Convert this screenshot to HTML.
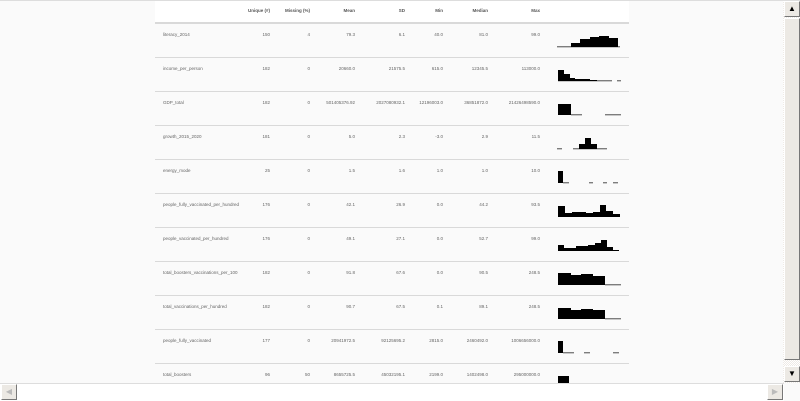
<!DOCTYPE html>
<html><head><meta charset="utf-8"><style>
html,body{margin:0;padding:0;width:800px;height:400px;overflow:hidden;background:#fafafa;font-family:"Liberation Sans",sans-serif;}
.t{position:absolute;font-size:4.5px;color:#666;white-space:nowrap;line-height:5px}
.r{text-align:right}
.h{font-weight:bold;color:#555}
</style></head><body>
<div style="position:absolute;left:0;top:0;width:800px;height:1px;background:#ddd"></div>
<div style="position:absolute;left:155px;top:1px;width:474px;height:21px;background:#fff"></div>
<svg width="800" height="400" style="position:absolute;left:0;top:0">
<g fill="#d9d9d9">
<rect x="155" y="22" width="474" height="2"/>
<rect x="155" y="57" width="474" height="1"/><rect x="155" y="91" width="474" height="1"/>
<rect x="155" y="125" width="474" height="1"/><rect x="155" y="159" width="474" height="1"/>
<rect x="155" y="193" width="474" height="1"/><rect x="155" y="227" width="474" height="1"/>
<rect x="155" y="261" width="474" height="1"/><rect x="155" y="295" width="474" height="1"/>
<rect x="155" y="329" width="474" height="1"/><rect x="155" y="363" width="474" height="1"/>
</g>
<g fill="#000">
<!-- r1 baseline 47 -->
<rect x="557" y="46.5" width="63" height="0.7"/>
<rect x="571" y="43" width="9" height="4"/><rect x="580" y="39" width="10" height="8"/><rect x="590" y="37" width="9" height="10"/><rect x="599" y="36" width="10" height="11"/><rect x="609" y="38" width="9" height="9"/>
<!-- r2 baseline 81 -->
<rect x="558" y="80.5" width="54" height="0.7"/><rect x="617" y="80.5" width="4" height="0.7"/>
<rect x="558" y="70" width="6" height="11"/><rect x="564" y="74" width="6" height="7"/><rect x="570" y="78" width="5" height="3"/><rect x="575" y="79" width="15" height="2"/><rect x="590" y="80" width="7" height="1"/>
<!-- r3 baseline 115 -->
<rect x="558" y="104" width="13" height="11"/><rect x="571" y="114.5" width="11" height="0.7"/><rect x="605" y="114.5" width="16" height="0.7"/>
<!-- r4 baseline 149 -->
<rect x="557" y="148.5" width="5" height="0.7"/><rect x="573" y="148.5" width="34" height="0.7"/>
<rect x="579" y="144" width="6" height="5"/><rect x="585" y="138" width="6" height="11"/><rect x="591" y="144" width="6" height="5"/>
<!-- r5 baseline 183 -->
<rect x="558" y="171" width="5" height="12"/><rect x="563" y="182.5" width="6" height="0.7"/><rect x="589" y="182.5" width="4" height="0.7"/><rect x="603" y="182.5" width="4" height="0.7"/><rect x="613" y="182.5" width="5" height="0.7"/>
<!-- r6 baseline 217 -->
<rect x="558" y="206" width="7" height="11"/><rect x="565" y="213" width="7" height="4"/><rect x="572" y="212" width="7" height="5"/><rect x="579" y="212" width="7" height="5"/><rect x="586" y="213" width="7" height="4"/><rect x="593" y="212" width="7" height="5"/><rect x="600" y="205" width="6" height="12"/><rect x="606" y="211" width="7" height="6"/><rect x="613" y="214" width="7" height="3"/>
<!-- r7 baseline 251 -->
<rect x="558" y="245" width="6" height="6"/><rect x="564" y="248" width="6" height="3"/><rect x="570" y="248" width="6" height="3"/><rect x="576" y="246" width="6" height="5"/><rect x="582" y="246" width="6" height="5"/><rect x="588" y="245" width="7" height="6"/><rect x="595" y="243" width="6" height="8"/><rect x="601" y="240" width="6" height="11"/><rect x="607" y="247" width="6" height="4"/><rect x="613" y="250" width="6" height="1"/>
<!-- r8 baseline 285 -->
<rect x="558" y="273" width="13" height="12"/><rect x="571" y="275" width="10" height="10"/><rect x="581" y="274" width="12" height="11"/><rect x="593" y="276" width="12" height="9"/><rect x="605" y="284.5" width="16" height="0.7"/>
<!-- r9 baseline 319 -->
<rect x="558" y="308" width="13" height="11"/><rect x="571" y="310" width="10" height="9"/><rect x="581" y="309" width="12" height="10"/><rect x="593" y="310" width="12" height="9"/><rect x="605" y="318.5" width="16" height="0.7"/>
<!-- r10 baseline 353 -->
<rect x="558" y="341" width="5" height="12"/><rect x="563" y="352.5" width="11" height="0.7"/><rect x="584" y="352.5" width="6" height="0.7"/><rect x="613" y="352.5" width="6" height="0.7"/>
<!-- r11 -->
<rect x="558" y="376" width="11" height="7"/>
</g>
</svg>
<div class="t h r" style="left:230px;top:8px;width:40px">Unique (#)</div>
<div class="t h r" style="left:270px;top:8px;width:40px">Missing (%)</div>
<div class="t h r" style="left:315px;top:8px;width:40px">Mean</div>
<div class="t h r" style="left:365px;top:8px;width:40px">SD</div>
<div class="t h r" style="left:403px;top:8px;width:40px">Min</div>
<div class="t h r" style="left:448px;top:8px;width:40px">Median</div>
<div class="t h r" style="left:500px;top:8px;width:40px">Max</div>

<div style="position:absolute;left:0;top:0">
<div class="t" style="left:163px;top:32px">literacy_2014</div>
<div class="t" style="left:163px;top:66px">income_per_person</div>
<div class="t" style="left:163px;top:100px">GDP_total</div>
<div class="t" style="left:163px;top:134px">growth_2015_2020</div>
<div class="t" style="left:163px;top:168px">energy_mode</div>
<div class="t" style="left:163px;top:202px">people_fully_vaccinated_per_hundred</div>
<div class="t" style="left:163px;top:236px">people_vaccinated_per_hundred</div>
<div class="t" style="left:163px;top:270px">total_boosters_vaccinations_per_100</div>
<div class="t" style="left:163px;top:304px">total_vaccinations_per_hundred</div>
<div class="t" style="left:163px;top:338px">people_fully_vaccinated</div>
<div class="t" style="left:163px;top:372px">total_boosters</div>
</div>
<div style="position:absolute;left:0;top:0">
<!-- columns -->
<div class="t r" style="left:230px;top:32px;width:40px">150</div><div class="t r" style="left:270px;top:32px;width:40px">4</div><div class="t r" style="left:315px;top:32px;width:40px">79.3</div><div class="t r" style="left:365px;top:32px;width:40px">6.1</div><div class="t r" style="left:403px;top:32px;width:40px">40.0</div><div class="t r" style="left:448px;top:32px;width:40px">81.0</div><div class="t r" style="left:500px;top:32px;width:40px">99.0</div>
<div class="t r" style="left:230px;top:66px;width:40px">182</div><div class="t r" style="left:270px;top:66px;width:40px">0</div><div class="t r" style="left:315px;top:66px;width:40px">20660.0</div><div class="t r" style="left:365px;top:66px;width:40px">21575.5</div><div class="t r" style="left:403px;top:66px;width:40px">615.0</div><div class="t r" style="left:448px;top:66px;width:40px">12345.5</div><div class="t r" style="left:500px;top:66px;width:40px">113000.0</div>
<div class="t r" style="left:230px;top:100px;width:40px">182</div><div class="t r" style="left:270px;top:100px;width:40px">0</div><div class="t r" style="left:300px;top:100px;width:55px">501405376.92</div><div class="t r" style="left:345px;top:100px;width:60px">2027080932.1</div><div class="t r" style="left:393px;top:100px;width:50px">12196003.0</div><div class="t r" style="left:433px;top:100px;width:55px">36851872.0</div><div class="t r" style="left:480px;top:100px;width:60px">21426498590.0</div>
<div class="t r" style="left:230px;top:134px;width:40px">181</div><div class="t r" style="left:270px;top:134px;width:40px">0</div><div class="t r" style="left:315px;top:134px;width:40px">5.0</div><div class="t r" style="left:365px;top:134px;width:40px">2.3</div><div class="t r" style="left:403px;top:134px;width:40px">-3.0</div><div class="t r" style="left:448px;top:134px;width:40px">2.9</div><div class="t r" style="left:500px;top:134px;width:40px">11.5</div>
<div class="t r" style="left:230px;top:168px;width:40px">25</div><div class="t r" style="left:270px;top:168px;width:40px">0</div><div class="t r" style="left:315px;top:168px;width:40px">1.5</div><div class="t r" style="left:365px;top:168px;width:40px">1.6</div><div class="t r" style="left:403px;top:168px;width:40px">1.0</div><div class="t r" style="left:448px;top:168px;width:40px">1.0</div><div class="t r" style="left:500px;top:168px;width:40px">10.0</div>
<div class="t r" style="left:230px;top:202px;width:40px">176</div><div class="t r" style="left:270px;top:202px;width:40px">0</div><div class="t r" style="left:315px;top:202px;width:40px">42.1</div><div class="t r" style="left:365px;top:202px;width:40px">26.9</div><div class="t r" style="left:403px;top:202px;width:40px">0.0</div><div class="t r" style="left:448px;top:202px;width:40px">44.2</div><div class="t r" style="left:500px;top:202px;width:40px">93.5</div>
<div class="t r" style="left:230px;top:236px;width:40px">176</div><div class="t r" style="left:270px;top:236px;width:40px">0</div><div class="t r" style="left:315px;top:236px;width:40px">49.1</div><div class="t r" style="left:365px;top:236px;width:40px">27.1</div><div class="t r" style="left:403px;top:236px;width:40px">0.0</div><div class="t r" style="left:448px;top:236px;width:40px">52.7</div><div class="t r" style="left:500px;top:236px;width:40px">99.0</div>
<div class="t r" style="left:230px;top:270px;width:40px">182</div><div class="t r" style="left:270px;top:270px;width:40px">0</div><div class="t r" style="left:315px;top:270px;width:40px">91.8</div><div class="t r" style="left:365px;top:270px;width:40px">67.6</div><div class="t r" style="left:403px;top:270px;width:40px">0.0</div><div class="t r" style="left:448px;top:270px;width:40px">90.5</div><div class="t r" style="left:500px;top:270px;width:40px">248.5</div>
<div class="t r" style="left:230px;top:304px;width:40px">182</div><div class="t r" style="left:270px;top:304px;width:40px">0</div><div class="t r" style="left:315px;top:304px;width:40px">90.7</div><div class="t r" style="left:365px;top:304px;width:40px">67.5</div><div class="t r" style="left:403px;top:304px;width:40px">0.1</div><div class="t r" style="left:448px;top:304px;width:40px">89.1</div><div class="t r" style="left:500px;top:304px;width:40px">248.5</div>
<div class="t r" style="left:230px;top:338px;width:40px">177</div><div class="t r" style="left:270px;top:338px;width:40px">0</div><div class="t r" style="left:300px;top:338px;width:55px">20941972.5</div><div class="t r" style="left:345px;top:338px;width:60px">92125695.2</div><div class="t r" style="left:393px;top:338px;width:50px">2815.0</div><div class="t r" style="left:433px;top:338px;width:55px">2460492.0</div><div class="t r" style="left:480px;top:338px;width:60px">1006656000.0</div>
<div class="t r" style="left:230px;top:372px;width:40px">96</div><div class="t r" style="left:270px;top:372px;width:40px">50</div><div class="t r" style="left:300px;top:372px;width:55px">8655725.5</div><div class="t r" style="left:345px;top:372px;width:60px">45032195.1</div><div class="t r" style="left:393px;top:372px;width:50px">2199.0</div><div class="t r" style="left:433px;top:372px;width:55px">1402498.0</div><div class="t r" style="left:480px;top:372px;width:60px">295000000.0</div>
</div>

<!-- scrollbars -->
<div style="position:absolute;left:0;top:383px;width:784px;height:17px;background:#fff;border-top:1px solid #ddd"></div>
<div style="position:absolute;left:1px;top:384px;width:14px;height:14px;background:#ece9e4;border:1px solid;border-color:#fff #777 #777 #fff;color:#bbb;font-size:8px;line-height:14px;text-align:center">◀</div>
<div style="position:absolute;left:767px;top:384px;width:14px;height:14px;background:#ece9e4;border:1px solid;border-color:#fff #777 #777 #fff;color:#bbb;font-size:8px;line-height:14px;text-align:center">▶</div>
<div style="position:absolute;left:783px;top:1px;width:17px;height:382px;background:repeating-conic-gradient(#eeeae6 0 25%,#fff 0 50%) 0 0/2px 2px"></div>
<div style="position:absolute;left:784px;top:1px;width:14px;height:14px;background:#ece9e4;border:1px solid;border-color:#fff #777 #777 #fff;color:#000;font-size:8px;line-height:14px;text-align:center">▲</div>
<div style="position:absolute;left:784px;top:18px;width:14px;height:340px;background:#ece9e4;border:1px solid;border-color:#fff #777 #777 #fff"></div>
<div style="position:absolute;left:784px;top:366px;width:14px;height:14px;background:#ece9e4;border:1px solid;border-color:#fff #777 #777 #fff;color:#000;font-size:8px;line-height:14px;text-align:center">▼</div>
</body></html>
